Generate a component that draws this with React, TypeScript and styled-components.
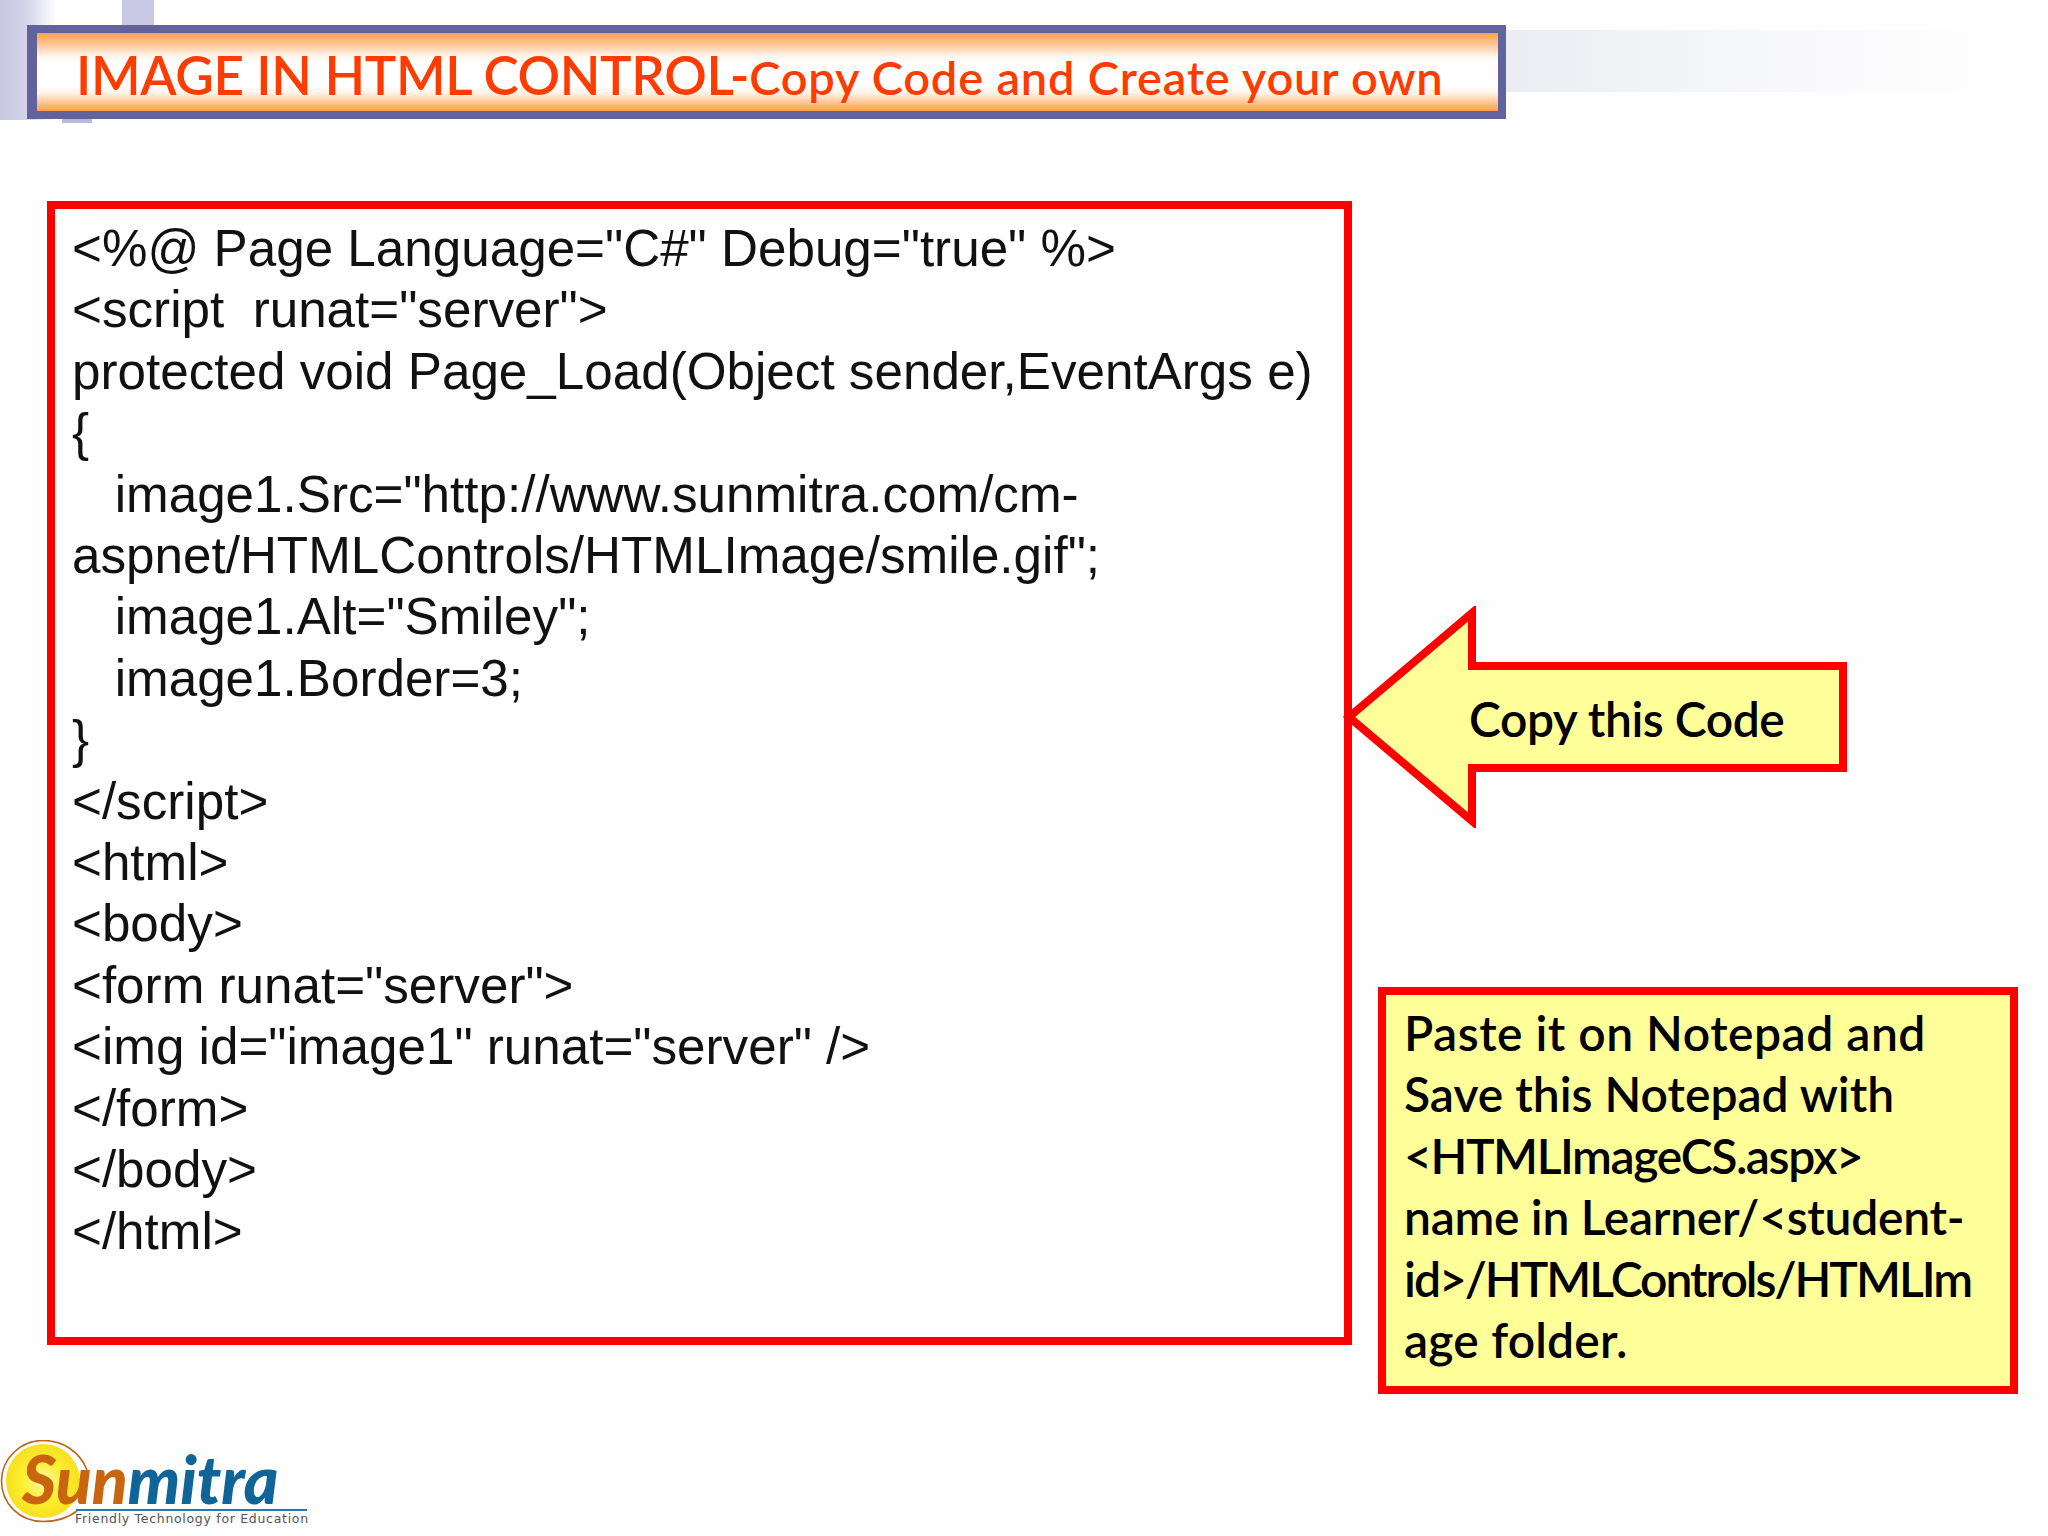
import React from "react";
import styled, { createGlobalStyle } from "styled-components";

const Global = createGlobalStyle`
  html, body { margin: 0; padding: 0; background: #fefefe; }
  #root { width: 2048px; height: 1536px; overflow: hidden; }
`;

const Page = styled.div`
  width: 2048px;
  height: 1536px;
  display: flex;
  flex-direction: column;
  background: #fefefe;
  font-family: "Liberation Sans", Arial, sans-serif;
`;

const Header = styled.header`
  position: relative;
  height: 120px;
  display: flex;
  align-items: flex-start;
  padding: 25px 0 0 27px;
  box-sizing: border-box;
`;

const SideFade = styled.div`
  position: absolute;
  left: 0;
  top: 0;
  width: 56px;
  height: 120px;
  background: linear-gradient(90deg, #c8c8e3 0%, #d2d2e9 45%, #f2f2f9 85%, #fefefe 100%);
`;

const TopTab = styled.div`
  position: absolute;
  left: 122px;
  top: 0;
  width: 32px;
  height: 26px;
  background: #c9c9e5;
`;

const LowTab = styled.div`
  position: absolute;
  left: 62px;
  top: 118px;
  width: 30px;
  height: 5px;
  background: #b9b9dd;
`;

const TitleBar = styled.div`
  position: relative;
  box-sizing: border-box;
  width: 1479px;
  height: 94px;
  border: solid #62629c;
  border-width: 8px 8px 8px 10px;
  display: flex;
  align-items: baseline;
  padding: 12px 0 0 39px;
  color: #ff3c00;
  font-family: Lato, "Noto Sans", sans-serif;
  font-weight: 600;
  line-height: 60px;
  white-space: pre;
  background: linear-gradient(180deg, #ff9f4a 0%, #ffc492 14%, #fff6ee 30%, #ffffff 38%, #ffffff 68%, #fff0e2 78%, #ffc28c 90%, #ff9f4a 100%);
`;

const TitleMain = styled.span`
  font-size: 53px;
  letter-spacing: -0.37px;
`;

const TitleSub = styled.span`
  font-size: 47px;
  letter-spacing: 0.8px;
`;

const RightFade = styled.div`
  width: 480px;
  height: 62px;
  margin-top: 5px;
  background: linear-gradient(90deg, #ebecf1 0%, #f4f5f8 40%, #fafafc 70%, #fefefe 100%);
`;

const Main = styled.main`
  display: flex;
  align-items: flex-start;
  margin-top: 81px;
  padding-left: 47px;
`;

const CodeBox = styled.pre`
  box-sizing: border-box;
  width: 1305px;
  height: 1144px;
  margin: 0;
  border: 8px solid #ff0000;
  padding: 9px 0 0 17px;
  background: #ffffff;
  color: #111111;
  font-family: "Liberation Sans", Arial, sans-serif;
  font-size: 51.2px;
  line-height: 61.4px;
  white-space: pre;
`;

const Aside = styled.aside`
  display: flex;
  flex-direction: column;
  align-items: flex-start;
`;

const ArrowCallout = styled.div`
  position: relative;
  box-sizing: border-box;
  width: 505px;
  height: 222px;
  margin: 405px 0 0 -9px;
  padding: 2px 0 0 126px;
  display: flex;
  align-items: center;
`;

const ArrowShape = styled.svg`
  position: absolute;
  inset: 0;
  width: 505px;
  height: 222px;
`;

const CalloutText = styled.span`
  position: relative;
  font-family: Lato, "Noto Sans", sans-serif;
  font-size: 48px;
  font-weight: 600;
  letter-spacing: -0.45px;
  line-height: 61px;
  color: #000000;
  white-space: pre;
`;

const NoteBox = styled.div`
  box-sizing: border-box;
  width: 640px;
  height: 407px;
  margin: 159px 0 0 26px;
  border: 8px solid #ff0000;
  background: #ffff99;
  padding: 7px 0 0 18px;
  font-family: Lato, "Noto Sans", sans-serif;
  font-size: 48px;
  font-weight: 600;
  line-height: 61.4px;
  color: #000000;
  white-space: pre;
`;

const NoteLine = styled.div<{ $tracking: number }>`
  letter-spacing: ${(p) => p.$tracking}px;
`;

const Logo = styled.div`
  position: relative;
  width: 310px;
  height: 88px;
  margin-top: 46px;
  flex: none;
`;

const SunMark = styled.svg`
  position: absolute;
  left: 0;
  top: 0;
  width: 90px;
  height: 84px;
`;

const Wordmark = styled.div`
  position: absolute;
  left: 22px;
  top: 9px;
  font-family: Lato, "Liberation Sans", sans-serif;
  font-style: italic;
  font-weight: 900;
  font-size: 66px;
  line-height: 60px;
  white-space: pre;
`;

const WordPart = styled.span<{ $color: string }>`
  color: ${(p) => p.$color};
`;

const Rule = styled.div`
  position: absolute;
  left: 76px;
  top: 69px;
  width: 231px;
  height: 2px;
  background: #2a77a8;
`;

const Tagline = styled.div`
  position: absolute;
  left: 75px;
  top: 71px;
  font-family: "DejaVu Sans", sans-serif;
  font-size: 12.5px;
  line-height: 15px;
  letter-spacing: 0.7px;
  color: #555555;
  white-space: pre;
`;

const code = `<%@ Page Language="C#" Debug="true" %>
<script  runat="server">
protected void Page_Load(Object sender,EventArgs e)
{
   image1.Src="http://www.sunmitra.com/cm-
aspnet/HTMLControls/HTMLImage/smile.gif";
   image1.Alt="Smiley";
   image1.Border=3;
}
</script>
<html>
<body>
<form runat="server">
<img id="image1" runat="server" />
</form>
</body>
</html>`;

const noteLines = [
  { text: "Paste it on Notepad and", tracking: 0.5 },
  { text: "Save this Notepad with", tracking: 0 },
  { text: "<HTMLImageCS.aspx>", tracking: -1.4 },
  { text: "name in Learner/<student-", tracking: -0.3 },
  { text: "id>/HTMLControls/HTMLIm", tracking: -2 },
  { text: "age folder.", tracking: 0.2 },
];

export default function App() {
  return (
    <Page>
      <Global />
      <Header>
        <SideFade />
        <TopTab />
        <LowTab />
        <TitleBar>
          <TitleMain>IMAGE IN HTML CONTROL-</TitleMain>
          <TitleSub>Copy Code and Create your own</TitleSub>
        </TitleBar>
        <RightFade />
      </Header>
      <Main>
        <CodeBox>{code}</CodeBox>
        <Aside>
          <ArrowCallout>
            <ArrowShape viewBox="0 0 505 222">
              <polygon
                points="6,111 129,7 129,60 500,60 500,162 129,162 129,215"
                fill="#ffff99"
                stroke="#ff0000"
                strokeWidth="8"
                strokeMiterlimit="10"
              />
            </ArrowShape>
            <CalloutText>Copy this Code</CalloutText>
          </ArrowCallout>
          <NoteBox>
            {noteLines.map((l) => (
              <NoteLine key={l.text} $tracking={l.tracking}>
                {l.text}
              </NoteLine>
            ))}
          </NoteBox>
        </Aside>
      </Main>
      <Logo>
        <SunMark viewBox="0 0 90 84">
          <defs>
            <radialGradient id="sun" cx="0.5" cy="0.5" r="0.5">
              <stop offset="0" stopColor="#fff9a8" />
              <stop offset="0.55" stopColor="#ffee30" />
              <stop offset="1" stopColor="#f7e020" />
            </radialGradient>
          </defs>
          <circle cx="43" cy="41" r="37" fill="url(#sun)" />
          <path
            d="M87 30 C80 12 63 0.5 43 0.5 C20 0.5 1.5 19 1.5 41 C1.5 64 20 81.5 43 81.5 C56 81.5 68 78 77 71"
            fill="none"
            stroke="#b8651a"
            strokeWidth="1.6"
          />
        </SunMark>
        <Wordmark>
          <WordPart $color="#c9650f">Sun</WordPart>
          <WordPart $color="#0f6498">mitra</WordPart>
        </Wordmark>
        <Rule />
        <Tagline>Friendly Technology for Education</Tagline>
      </Logo>
    </Page>
  );
}
